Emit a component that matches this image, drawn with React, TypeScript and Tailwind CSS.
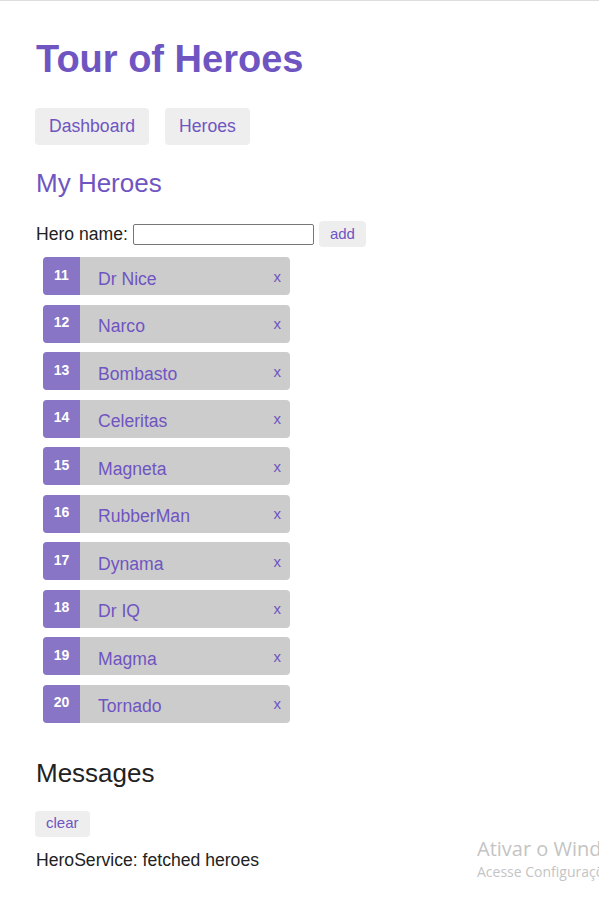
import React from "react";

const heroes = [
  { id: 11, name: "Dr Nice" },
  { id: 12, name: "Narco" },
  { id: 13, name: "Bombasto" },
  { id: 14, name: "Celeritas" },
  { id: 15, name: "Magneta" },
  { id: 16, name: "RubberMan" },
  { id: 17, name: "Dynama" },
  { id: 18, name: "Dr IQ" },
  { id: 19, name: "Magma" },
  { id: 20, name: "Tornado" },
];

export default function App() {
  return (
    <div className="relative h-[900px] w-[599px] overflow-hidden border-t border-[#dddddd] bg-white font-['Liberation_Sans',Arial,sans-serif] text-[17.6px] text-[#333]">
      <div className="px-[35px]">
        <h1 className="mt-[35px] pl-[1px] text-[38px] font-bold leading-[46px] text-[#6f55c1]">
          Tour of Heroes
        </h1>
        <nav className="mt-[26px] flex gap-[16px]">
          <button className="h-[37px] rounded-[4px] bg-[#eeeeee] px-[14px] text-[17.6px] text-[#6f55c1]">
            Dashboard
          </button>
          <button className="h-[37px] rounded-[4px] bg-[#eeeeee] px-[14px] text-[17.6px] text-[#6f55c1]">
            Heroes
          </button>
        </nav>

        <h2 className="mt-[20px] pl-[1px] text-[26px] leading-[36px] text-[#6f55c1]">My Heroes</h2>

        <div className="mt-[20px] flex items-center pl-[1px]">
          <label className="leading-[26px] text-[#222]">Hero name:</label>
          <input className="ml-[5px] h-[21px] w-[181px] rounded-[2px] border border-[#767676] bg-white" />
          <button className="ml-[5px] h-[26px] rounded-[4px] bg-[#eeeeee] px-[11px] text-[15px] text-[#6f55c1]">
            add
          </button>
        </div>

        <ul className="mt-[10px] flex flex-col gap-[9.5px] pl-[8px]">
          {heroes.map((h) => (
            <li
              key={h.id}
              className="flex h-[38px] w-[247px] items-center overflow-hidden rounded-[4px] bg-[#cccccc]"
            >
              <span className="flex h-full w-[37px] items-center justify-center bg-[#8975c6] pb-[2px] text-[14px] font-bold text-white">
                {h.id}
              </span>
              <span className="ml-[18px] flex-1 pt-[6px] text-[17.6px] text-[#6f55c1]">{h.name}</span>
              <span className="mr-[9px] pt-[2px] text-[15px] text-[#6f55c1]">x</span>
            </li>
          ))}
        </ul>

        <h2 className="mt-[32px] pl-[1px] text-[26px] leading-[36px] text-[#222]">Messages</h2>
        <button className="mt-[20px] h-[26px] rounded-[4px] bg-[#eeeeee] px-[11px] text-[15px] text-[#6f55c1]">
          clear
        </button>
        <div className="mt-[10px] pl-[1px] text-[17.6px] leading-[26px] text-[#222]">
          HeroService: fetched heroes
        </div>
      </div>

      <div className="absolute left-[477px] top-[834px] whitespace-nowrap font-['Open_Sans','Noto_Sans',sans-serif] text-[#c4c4c4]">
        <div className="text-[20px] leading-[27px]">Ativar o Windows</div>
        <div className="text-[14px] leading-[20px]">Acesse Configurações para ativar o Windows.</div>
      </div>
    </div>
  );
}
